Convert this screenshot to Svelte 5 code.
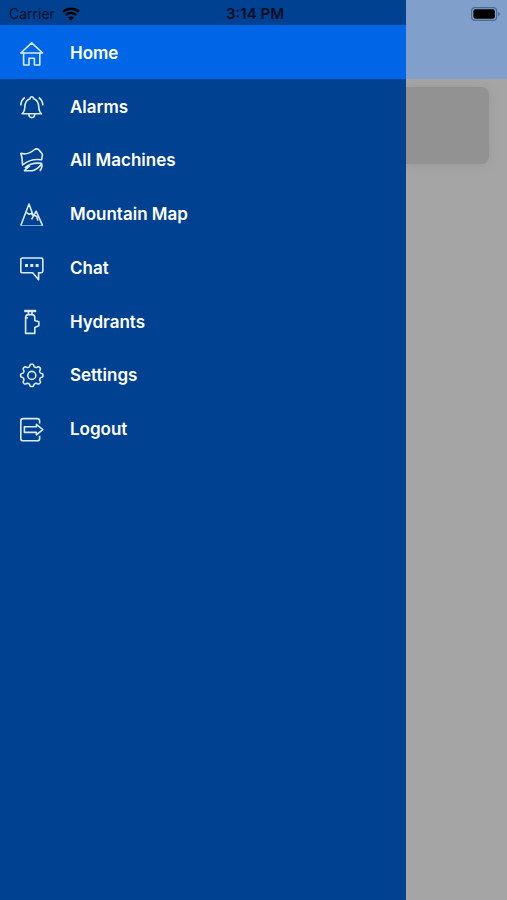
<script>
	let active = "Home";

	const items = ["Home", "Alarms", "All Machines", "Mountain Map", "Chat", "Hydrants", "Settings", "Logout"];

	// Outline of the settings gear: a circle with eight rounded teeth
	function gearPath() {
		const points = [];
		for (let i = 0; i < 160; i++) {
			const angle = (i / 160) * Math.PI * 2;
			const wave = Math.cos(angle * 8);
			const r = 10 + 1.2 * Math.tanh(2 * wave);
			points.push((11.8 + r * Math.cos(angle)).toFixed(2) + " " + (12.4 + r * Math.sin(angle)).toFixed(2));
		}
		return "M" + points.join("L") + "z";
	}
</script>

<div class="screen">
	<nav class="drawer">
		<ul>
			{#each items as item}
				<li>
					<button class:active={active === item} on:click={() => (active = item)}>
						<svg viewBox="0 0 24 24" aria-hidden="true">
							{#if item === "Home"}
								<path d="M3.6 12v12H9v-6.800h5.400V24h5.400V12M11.700 1.800.8 12h21.800z" />
							{:else if item === "Alarms"}
								<path d="M2 18.800c2.200-1.500 2.600-3 2.800-6.500C5 7.500 6.800 4.500 10 3.700c.2-2.700 3.400-2.700 3.600 0 3.200.8 5 3.800 5.200 8.600.2 3.500.6 5 2.800 6.500z" />
								<path d="M8.800 19c.2 4.800 5.800 4.800 6 0M4.800 2.500C2.200 4.300.8 6.800.8 10.500M18.800 2.500c2.600 1.800 4 4.300 4 8" />
							{:else if item === "All Machines"}
								<path d="M.8 5.400c6 1.500 9.600-.4 13.200-3.400 2-1.600 4-1.400 5.200.2 1.600 2.200 3.400 3 3.200 4.800l-.8 4.800c-7-1-13.600.6-19 5.200C2.200 13 2.400 9.200.8 5.400z" />
								<path d="M4.800 19.800c4.600-3.800 10-5.400 16.800-4.400.8 3.400-.2 5.800-1.800 7.600M4 22.800h8.500c3.500-1 6.500-3.400 9-6.800M4 22.800l6-5.200" />
							{:else if item === "Mountain Map"}
								<path class="thin" d="M.8 23.500h21.800" />
								<path d="M.8 23.500 9 2l4.200 11.600-2-2.200-2 .8-2.600-1.600M11.600 17.400l4.600-8.200 6.400 14.400M14.400 13l2.400 1.600 1 4" />
							{:else if item === "Chat"}
								<path d="M2.400 2h18.800c1 0 1.600.6 1.600 1.600v11.600c0 1-.6 1.600-1.600 1.600h-2.600v7l-6-7H2.400c-1 0-1.600-.6-1.600-1.600V3.600c0-1 .6-1.600 1.600-1.600z" />
								<path class="solid" d="M5 8h3v3H5zM10.300 8h3v3h-3zM15.600 8h3v3h-3z" />
							{:else if item === "Hydrants"}
								<path class="bar" d="M4.200 1h12" />
								<path d="M8.400 1.600v3M12 1.600v3M5.600 23.400V7.600c0-1.800 1.200-3 3-3H12c1.800 0 2.800 1.200 2.800 3v2.800l4 1.400v4l-4 1.600v6zM5.600 8H8" />
							{:else if item === "Settings"}
								<path d={gearPath()} />
								<circle cx="11.800" cy="12.400" r="4" />
							{:else}
								<path d="M19.600 6.400V4c0-1.500-.9-2.400-2.400-2.400h-14C1.700 1.600.8 2.500.8 4v17.400c0 1.500.9 2.400 2.400 2.400h14c1.500 0 2.400-.9 2.400-2.400v-2.600" />
								<path d="M4.400 9.800h12V7.400l6.400 5.200-6.400 5.200v-2.400h-12z" />
							{/if}
						</svg>
						<span>{item}</span>
					</button>
				</li>
			{/each}
		</ul>
	</nav>

	<main>
		<header></header>
		<div class="card"></div>
	</main>

	<div class="status">
		<div class="carrier">
			<span>Carrier</span>
			<svg width="18" height="14" viewBox="0 0 18 14" aria-label="Wi-Fi">
				<path d="M1 4.800c4.600-4.200 11.400-4.200 16 0M3.900 8c3-2.700 7.200-2.700 10.200 0" fill="none" stroke="#000" stroke-width="2.500" />
				<path d="M9 13.600 5.900 10.500c1.800-1.500 4.400-1.500 6.200 0z" />
			</svg>
		</div>
		<time>3:14 PM</time>
		<svg class="battery" width="30" height="14" viewBox="0 0 30 14" aria-label="Battery full">
			<rect x=".6" y=".6" width="25" height="12.800" rx="3.500" fill="none" stroke="#4c6a90" stroke-width="1.200" />
			<rect x="2.400" y="2.300" width="21.400" height="9.400" rx="2" />
			<path d="M27.200 4.800c2.200.8 2.200 3.600 0 4.400z" fill="#4c6a90" />
		</svg>
	</div>
</div>

<style>
	:global(body) {
		margin: 0;
		background: #a5a5a5;
	}

	.screen {
		position: relative;
		display: flex;
		min-height: 100vh;
		font-family: Inter, "Liberation Sans", sans-serif;
	}

	.drawer {
		width: 80%;
		padding-top: 25px;
		box-sizing: border-box;
		background: #004191;
	}

	ul {
		display: grid;
		grid-auto-rows: 1fr;
		height: 430px;
		margin: 0;
		padding: 0;
		list-style: none;
	}

	li {
		display: flex;
	}

	button {
		display: flex;
		flex: 1;
		align-items: center;
		gap: 26px;
		padding: 2px 20px 0;
		border: 0;
		background: none;
		color: #fff;
		font: 600 17px/24px Inter, "Liberation Sans", sans-serif;
		text-align: left;
		cursor: pointer;
	}

	button.active {
		background: #0066e8;
	}

	button svg {
		width: 24px;
		height: 24px;
		overflow: visible;
		fill: none;
		stroke: #dcebff;
		stroke-width: 1.6;
		stroke-linejoin: round;
	}

	.thin {
		stroke-width: 0.8;
		opacity: 0.7;
	}

	.bar {
		stroke-width: 2.4;
	}

	.solid {
		fill: #dcebff;
		stroke: none;
	}

	main {
		flex: 1;
		overflow: hidden;
	}

	header {
		height: 79px;
		background: #80a0cb;
	}

	.card {
		height: 77px;
		margin: 8px 18px 0 0;
		border-radius: 0 8px 8px 0;
		background: #929292;
		box-shadow: 0 1px 8px #989898;
	}

	/* status bar lies over both the drawer and the page header */
	.status {
		position: absolute;
		top: 0;
		left: 0;
		right: 0;
		display: grid;
		grid-template-columns: 1fr auto 1fr;
		align-items: center;
		height: 27px;
		padding: 0 6px 0 9px;
		color: #000d20;
		font-size: 14px;
	}

	.carrier {
		display: flex;
		align-items: center;
		gap: 7px;
	}

	time {
		font-size: 15px;
		font-weight: 600;
	}

	.battery {
		justify-self: end;
	}
</style>
